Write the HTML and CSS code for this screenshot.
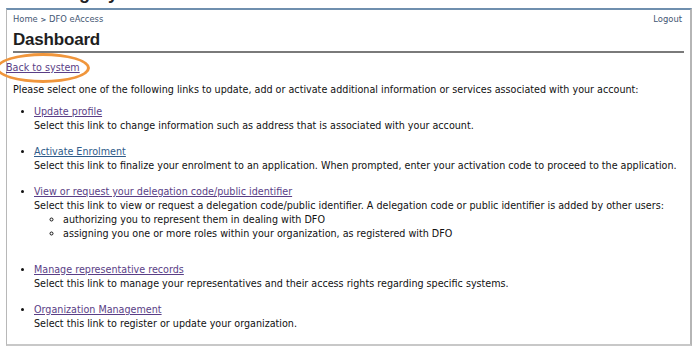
FILE: index.html
```html
<!DOCTYPE html>
<html>
<head>
<meta charset="utf-8">
<link rel="stylesheet" href="styles.css">
</head>
<body>
<div class="cut-title">Category</div>
<div class="frame">
  <div class="topbar">
    <div class="crumbs"><a href="#">Home</a> <span class="sep">&gt;</span> <a href="#">DFO eAccess</a></div>
    <a class="logout" href="#">Logout</a>
  </div>
  <h1 class="title">Dashboard</h1>
  <div class="back-wrap">
    <a class="back visited" href="#">Back to system</a>
    <span class="ring"></span>
  </div>
  <p class="intro">Please select one of the following links to update, add or activate additional information or services associated with your account:</p>
  <ul class="links">
    <li><a class="visited" href="#">Update profile</a><br>Select this link to change information such as address that is associated with your account.</li>
    <li><a href="#">Activate Enrolment</a><br>Select this link to finalize your enrolment to an application. When prompted, enter your activation code to proceed to the application.</li>
    <li class="big"><a class="visited" href="#">View or request your delegation code/public identifier</a><br>Select this link to view or request a delegation code/public identifier. A delegation code or public identifier is added by other users:
      <ul class="sub">
        <li>authorizing you to represent them in dealing with DFO</li>
        <li>assigning you one or more roles within your organization, as registered with DFO</li>
      </ul>
    </li>
    <li><a class="visited" href="#">Manage representative records</a><br>Select this link to manage your representatives and their access rights regarding specific systems.</li>
    <li><a class="visited" href="#">Organization Management</a><br>Select this link to register or update your organization.</li>
  </ul>
</div>
</body>
</html>
```
FILE: styles.css
```css
html, body {
  margin: 0;
  padding: 0;
  background: #ffffff;
}
body {
  font-family: "DejaVu Sans", Verdana, sans-serif;
  font-size: 9.6px;
  color: #111;
  width: 700px;
  height: 355px;
  overflow: hidden;
  position: relative;
  padding-top: 8px;
  box-sizing: border-box;
}
.cut-title {
  position: absolute;
  left: 40px;
  top: -17px;
  font-family: "Liberation Sans", Arial, sans-serif;
  font-size: 18px;
  font-weight: bold;
  line-height: 20px;
  color: #222;
}
.frame {
  margin: 0 0 0 6px;
  width: 686px;
  height: 338px;
  border-top: 2px solid #6f8fae;
  border-left: 1px solid #b8b8b8;
  border-right: 2px solid #b5b5b5;
  border-bottom: 2px solid #c8c8c8;
  box-sizing: border-box;
  padding: 0 6px 0 6px;
}
.topbar {
  display: flex;
  justify-content: space-between;
  padding-top: 3px;
  height: 13px;
  font-size: 8.4px;
  line-height: 12px;
}
.topbar a {
  color: #3f5673;
  text-decoration: none;
}
.sep { color: #3f5673; font-size: 7px; font-weight: bold; }
.logout { margin-right: 2px; }
.title {
  margin: 4px 0 0 0;
  font-family: "Liberation Sans", Arial, sans-serif;
  font-size: 17px;
  letter-spacing: -0.2px;
  font-weight: bold;
  color: #1e1e1e;
  padding-bottom: 1px;
  border-bottom: 2px solid #7a7a7a;
  line-height: 20px;
}
.back-wrap {
  position: relative;
  margin-left: -7px;
  margin-top: 8px;
  height: 14px;
}
a { color: #2f5b8a; }
a.visited { color: #5a3e86; }
.back { line-height: 14px; }
.ring {
  position: absolute;
  left: -10px;
  top: -8px;
  width: 88px;
  height: 24px;
  border: 3px solid #f0963c;
  border-radius: 50%;
}
.intro {
  margin: 8px 0 0 0;
  line-height: 14px;
}
.links {
  margin: 0;
  padding: 0 0 0 21px;
  list-style: disc;
}
.links > li {
  line-height: 14px;
  margin-top: 12px;
}
.links > li:first-child { margin-top: 8px; }
.links > li.big { padding-bottom: 11px; }
.sub {
  margin: 0;
  padding: 0 0 0 29px;
  list-style: circle;
}
.sub li { line-height: 13.5px; }
```
